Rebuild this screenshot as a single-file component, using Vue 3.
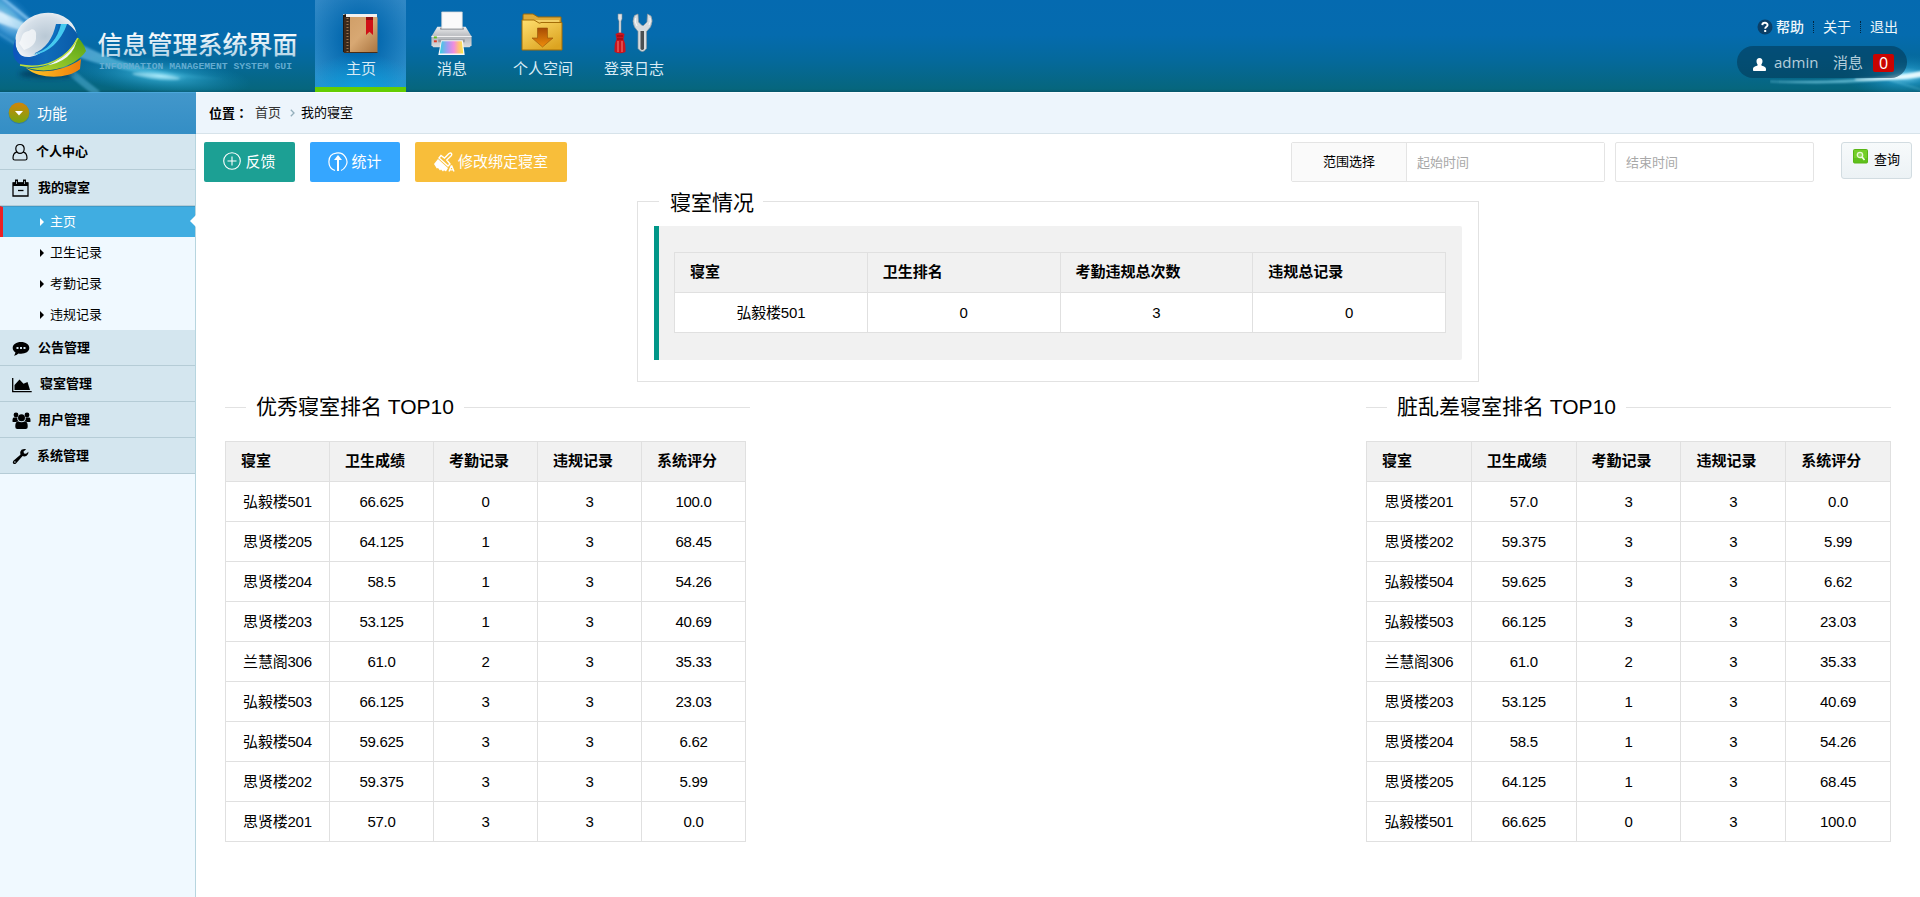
<script setup>
const navItems = [
  { key: 'home', label: '主页' },
  { key: 'message', label: '消息' },
  { key: 'space', label: '个人空间' },
  { key: 'log', label: '登录日志' },
]
const topMenus = [
  { key: 'user', label: '个人中心' },
  { key: 'calendar', label: '我的寝室' },
]
const subMenus = ['主页', '卫生记录', '考勤记录', '违规记录']
const bottomMenus = [
  { key: 'comment', label: '公告管理' },
  { key: 'chart', label: '寝室管理' },
  { key: 'group', label: '用户管理' },
  { key: 'wrench', label: '系统管理' },
]
const summaryHead = ['寝室', '卫生排名', '考勤违规总次数', '违规总记录']
const summaryRow = ['弘毅楼501', '0', '3', '0']
const rankHead = ['寝室', '卫生成绩', '考勤记录', '违规记录', '系统评分']
const best = [
  ['弘毅楼501', '66.625', '0', '3', '100.0'],
  ['思贤楼205', '64.125', '1', '3', '68.45'],
  ['思贤楼204', '58.5', '1', '3', '54.26'],
  ['思贤楼203', '53.125', '1', '3', '40.69'],
  ['兰慧阁306', '61.0', '2', '3', '35.33'],
  ['弘毅楼503', '66.125', '3', '3', '23.03'],
  ['弘毅楼504', '59.625', '3', '3', '6.62'],
  ['思贤楼202', '59.375', '3', '3', '5.99'],
  ['思贤楼201', '57.0', '3', '3', '0.0'],
]
const ranks = [
  { key: 'best', title: '优秀寝室排名 TOP10', rows: best },
  { key: 'worst', title: '脏乱差寝室排名 TOP10', rows: [...best].reverse() },
]
</script>

<template>
  <div class="page">
    <header class="top">
      <div class="logo">
        <svg width="315" height="92" viewBox="0 0 315 92">
          <defs>
            <linearGradient id="titleFill" x1="0" y1="0" x2="0" y2="1">
              <stop offset="0.2" stop-color="#ffffff" /><stop offset="1" stop-color="#a9cfe4" />
            </linearGradient>
            <radialGradient id="orb" cx="0.5" cy="0.45" r="0.6">
              <stop offset="0" stop-color="#b9c8d5" /><stop offset="0.6" stop-color="#d5dfe8" /><stop offset="1" stop-color="#ffffff" />
            </radialGradient>
            <linearGradient id="orbBlue" x1="0" y1="0" x2="1" y2="0">
              <stop offset="0" stop-color="#0d55bd" /><stop offset="0.5" stop-color="#106cb9" /><stop offset="1" stop-color="#0a5aa8" />
            </linearGradient>
            <linearGradient id="orbGreen" x1="0" y1="1" x2="1" y2="0">
              <stop offset="0" stop-color="#c5d72b" /><stop offset="0.5" stop-color="#83bf27" /><stop offset="1" stop-color="#55a012" />
            </linearGradient>
            <linearGradient id="orbOrange" x1="0" y1="0" x2="1" y2="0">
              <stop offset="0" stop-color="#ffc928" /><stop offset="1" stop-color="#ef7d0a" />
            </linearGradient>
            <radialGradient id="flare">
              <stop offset="0" stop-color="#8fe4fb" stop-opacity="0.9" /><stop offset="0.3" stop-color="#3ebbe6" stop-opacity="0.5" /><stop offset="1" stop-color="#1490c8" stop-opacity="0" />
            </radialGradient>
            <radialGradient id="cornerGlow">
              <stop offset="0" stop-color="#d4edff" stop-opacity="0.95" /><stop offset="0.5" stop-color="#62b2ea" stop-opacity="0.6" /><stop offset="1" stop-color="#2282c8" stop-opacity="0" />
            </radialGradient>
            <linearGradient id="beam" x1="0" y1="0" x2="1" y2="0.3">
              <stop offset="0" stop-color="#e8f7ff" stop-opacity="0.9" /><stop offset="0.4" stop-color="#74c0ea" stop-opacity="0.6" /><stop offset="0.65" stop-color="#7fdcf2" stop-opacity="0.6" /><stop offset="1" stop-color="#46b6d6" stop-opacity="0" />
            </linearGradient>
            <filter id="soft" x="-20%" y="-50%" width="140%" height="200%"><feGaussianBlur stdDeviation="0.9" /></filter>
            <filter id="shade" x="-30%" y="-100%" width="160%" height="300%"><feGaussianBlur stdDeviation="2.500" /></filter>
          </defs>
          <ellipse cx="6" cy="18" rx="44" ry="22" fill="url(#cornerGlow)" transform="rotate(42 6 18)" />
          <g filter="url(#soft)">
            <path d="M-4 0 C25 30 60 66 98 94" stroke="#58b3da" stroke-opacity="0.5" stroke-width="7" fill="none" />
            <path d="M-4 10 C20 20 45 34 82 45 C120 63 150 76 285 81 C200 83 120 74 76 56 C45 42 18 28 -4 22Z" fill="url(#beam)" />
            <path d="M2 -2 L34 24" stroke="#9ad3f8" stroke-opacity="0.7" stroke-width="3" />
            <path d="M-2 33 L22 48" stroke="#67b5e6" stroke-opacity="0.5" stroke-width="2" />
          </g>
          <ellipse cx="160" cy="76" rx="92" ry="19" fill="url(#flare)" transform="rotate(5 160 76)" />
          <ellipse cx="156" cy="76" rx="24" ry="2.500" fill="#c2f4ff" fill-opacity="0.5" filter="url(#soft)" transform="rotate(6 156 76)" />
          <ellipse cx="47" cy="74" rx="28" ry="4" fill="#01314f" fill-opacity="0.7" filter="url(#shade)" />
          <path d="M26 68 C42 75 66 70 81 59 L80 69 C68 79 40 80 26 68Z" fill="url(#orbOrange)" />
          <path d="M20 64 C44 69 68 58 78 38 C82 41 85 47 86 51 C76 67 42 78 20 64Z" fill="url(#orbGreen)" />
          <ellipse cx="46" cy="39" rx="31" ry="26" fill="url(#orb)" transform="rotate(-12 46 39)" />
          <path d="M19 43 C23 39 20 32 29 31 C33 27 37 31 36 36 C37 43 31 48 24 50Z" fill="#ffffff" fill-opacity="0.65" />
          <path d="M16 38 C14 50 19 58 30 57 C46 54 53 41 57 24 L68 24 C72 27 77 32 78 36 C70 55 51 68 31 68 C15 66 9 55 16 38Z" fill="url(#orbBlue)" />
          <path d="M61 24 C58 38 49 49 33 55 C49 53 61 41 67 24Z" fill="#45c9ef" />
          <path d="M56 24 C53 38 46 49 33 54 C48 51 56 40 59 24Z" fill="#0d6fc0" />
          <path d="M20 65 C46 70 68 58 78 38" stroke="#bfe03a" stroke-width="1.500" fill="none" />
          <text class="logo-title" x="97.500" y="53.500" textLength="200" fill="url(#titleFill)">信息管理系统界面</text>
          <text class="logo-sub" x="99" y="68.500" textLength="193" lengthAdjust="spacingAndGlyphs">INFORMATION MANAGEMENT SYSTEM GUI</text>
        </svg>
      </div>

      <nav class="nav">
        <a v-for="(item, i) in navItems" :key="item.key" class="nav-item" :class="{ active: i === 0 }">
          <svg v-if="item.key === 'home'" width="45" height="45" viewBox="0 0 45 45">
            <defs>
              <linearGradient id="cover" x1="0" y1="0" x2="1" y2="1"><stop offset="0" stop-color="#cf9d66" /><stop offset="0.5" stop-color="#d8a873" /><stop offset="1" stop-color="#a9743f" /></linearGradient>
            </defs>
            <path d="M5 4h34v3H6z" fill="#f2f0ed" /><path d="M5 5l3-1v39l-3-1z" fill="#211812" />
            <rect x="6" y="7" width="33.500" height="36" rx="1" fill="url(#cover)" />
            <rect x="6" y="7" width="6" height="36" fill="#3d2a1b" />
            <path d="M9.500 8v34" stroke="#9a7450" stroke-width="2" stroke-dasharray="1 2" />
            <path d="M6 42.500h33.500" stroke="#4a2d17" />
            <path d="M28 7h7v18l-3.500-3.200-3.500 3.200z" fill="#cf1017" /><path d="M28 7h7v3h-7z" fill="#8f0c0c" />
          </svg>
          <svg v-else-if="item.key === 'message'" width="45" height="46" viewBox="0 0 45 46">
            <defs>
              <linearGradient id="body" x1="0" y1="0" x2="0" y2="1"><stop offset="0" stop-color="#eeeeef" /><stop offset="0.5" stop-color="#b4b7bb" /><stop offset="1" stop-color="#dadbdd" /></linearGradient>
              <linearGradient id="rainbow"><stop offset="0" stop-color="#32cfe4" /><stop offset="0.35" stop-color="#aa9af1" /><stop offset="0.6" stop-color="#f28ddd" /><stop offset="0.8" stop-color="#ffbd80" /><stop offset="1" stop-color="#f8eb44" /></linearGradient>
            </defs>
            <path d="M8 17h29l6 10v9l-2 2H4l-2-2V27z" fill="url(#body)" />
            <path d="M2 27h41" stroke="#f7f7f7" />
            <path d="M11 18h24v2H11z" fill="#7c8187" />
            <path d="M12.500 2h21v17H12.500z" fill="#fafafa" stroke="#d2d3d5" stroke-width="0.7" />
            <path d="M9 30h27v3H9z" fill="#7a7d82" fill-opacity="0.6" />
            <rect x="4.500" y="27" width="3" height="2" fill="#61bd22" /><rect x="4.500" y="31" width="3" height="2" fill="#df3924" />
            <path d="M12 31h22l2 15H9z" fill="#f8f8fa" /><path d="M12.500 32h20.500l1.500 12.500H10.500z" fill="url(#rainbow)" />
          </svg>
          <svg v-else-if="item.key === 'space'" width="45" height="45" viewBox="0 0 45 45">
            <defs>
              <linearGradient id="folder" x1="0" y1="0" x2="0.7" y2="1"><stop offset="0" stop-color="#ffdf6f" /><stop offset="1" stop-color="#dca421" /></linearGradient>
              <linearGradient id="arrow" x1="0" y1="0" x2="0" y2="1"><stop offset="0" stop-color="#a74b04" /><stop offset="1" stop-color="#ee8d0b" /></linearGradient>
            </defs>
            <path d="M3 39V5q0-1 1-1h9l5 3h23v31z" fill="#dfab38" stroke="#9b6908" />
            <path d="M7 10h32v8H7z" fill="#f2cf65" />
            <path d="M2 10h12l5 3q1 .5 2-.5h21V40H2z" fill="url(#folder)" stroke="#a36c07" stroke-width="1" />
            <path d="M17.500 18h10v10h5.500L22.500 37 12 28h5.500z" fill="url(#arrow)" stroke="#935008" stroke-width="0.6" />
          </svg>
          <svg v-else width="45" height="45" viewBox="0 0 45 45">
            <path d="M7 4h4v5l-1 2v13H8V11L7 9z" fill="#e1e3e5" stroke="#85919a" stroke-width="0.6" />
            <path d="M4.500 24q4.500-3 9 0l-1 5q2 4 2 10v3q-5.500 2.500-11 0v-3q0-6 2-10z" fill="#c9141d" />
            <path d="M7 31v11M11 31v11" stroke="#f58179" stroke-width="1" />
            <path d="M6 26h6M6 29h6" stroke="#7e0b13" />
            <path d="M23.500 5.500L27 4l.5 8 3.500 3.500h1.500L36 12l.5-8 3.500 2q2.500 5-.5 11l-4 4.500v17q-4 6-8.500 0V21.500l-3.500-4.500q-3-6 0-11.500z" fill="#d8dcdf" stroke="#8b969e" stroke-width="0.7" />
            <path d="M29.500 21h3.500v18q-1.700 2-3.500 0z" fill="#4a4f52" />
            <path d="M24.500 8q-1 4 1.500 8M39 8q1 4-1 7" stroke="#f8f8f8" fill="none" />
          </svg>
          <span>{{ item.label }}</span>
        </a>
      </nav>

      <svg class="right-glow" width="150" height="92" viewBox="0 0 150 92">
        <defs>
          <radialGradient id="rg"><stop offset="0" stop-color="#8fe4ff" stop-opacity="1" /><stop offset="0.4" stop-color="#28a2d6" stop-opacity="0.55" /><stop offset="1" stop-color="#0c78ae" stop-opacity="0" /></radialGradient>
          <filter id="rs" x="-20%" y="-50%" width="140%" height="200%"><feGaussianBlur stdDeviation="0.8" /></filter>
        </defs>
        <ellipse cx="134" cy="76" rx="60" ry="22" fill="url(#rg)" />
        <path d="M0 81 Q80 83 152 72 L152 76 Q85 86 0 82Z" fill="#8fe2f6" fill-opacity="0.65" filter="url(#rs)" />
        <path d="M85 79 Q120 78 152 71 L152 77 Q120 81 85 80Z" fill="#f1fdff" fill-opacity="0.9" filter="url(#rs)" />
        <path d="M120 80 L152 90" stroke="#7ed9ef" stroke-opacity="0.5" filter="url(#rs)" />
      </svg>

      <div class="account">
        <div class="links">
          <svg width="16" height="16" viewBox="0 0 16 16">
            <circle cx="8" cy="8" r="7.500" fill="#0a3f68" />
            <path d="M5.300 6.100C5.400 3 10.700 3.100 10.600 6.100C10.600 7.900 8.200 7.800 8.200 9.800" fill="none" stroke="#fff" stroke-width="1.900" /><rect x="7.200" y="11" width="2" height="2" fill="#fff" />
          </svg>
          <a class="help">帮助</a><i></i><a>关于</a><i></i><a>退出</a>
        </div>
        <div class="pill">
          <svg width="13" height="13" viewBox="0 0 13 13"><path d="M6.500 0C8.500 0 9.600 1.500 9.500 3.300C9.500 5 8.700 6 8.200 7c.1 1 4.800 1.200 4.800 4v1.200q0 .8-.8.8H.8q-.8 0-.8-.8V11C0 8.200 4.700 8 4.800 7C4.200 6 3.500 5 3.500 3.300C3.400 1.500 4.500 0 6.500 0Z" fill="#fff" /></svg>
          <span class="name">admin</span><span class="msg">消息</span><b>0</b>
        </div>
      </div>
    </header>

    <div class="body">
      <aside class="side">
        <div class="side-head">
          <svg width="22" height="22" viewBox="0 0 22 22">
            <defs><linearGradient id="knob" x1="0" y1="0" x2="0" y2="1"><stop offset="0" stop-color="#d28308" /><stop offset="1" stop-color="#74a812" /></linearGradient></defs>
            <circle cx="11" cy="11.500" r="10.500" fill="#2e6d8c" fill-opacity="0.6" /><circle cx="11" cy="10.800" r="10.300" fill="url(#knob)" /><path d="M7 9h8l-4 4.500z" fill="#fff" />
          </svg>
          <span>功能</span>
        </div>

        <div v-for="m in topMenus" :key="m.key" class="menu" :class="'m-' + m.key">
          <svg v-if="m.key === 'user'" width="16" height="18" viewBox="0 0 16 18"><path d="M8 1.500C10.700 1.500 12.200 3.400 12.200 5.800S10.500 10.400 8 10.400S3.800 8.200 3.800 5.800S5.300 1.500 8 1.500ZM4.500 9.200C1.800 10 1 12 1 15.200Q1 17 2.800 17H13.200Q15 17 15 15.200C15 12 14.200 10 11.500 9.200" fill="none" stroke="#000" stroke-width="1.200" /></svg>
          <svg v-else width="17" height="18" viewBox="0 0 17 18"><path d="M1 4h15v13H1z" fill="none" stroke="#000" stroke-width="1.300" /><path d="M1 3.500h15V7H1z" /><path d="M4.500 .5v4M12.500 .5v4" stroke="#000" stroke-width="3" /><path d="M4.500 2v3M12.500 2v3" stroke="#d4e6ef" stroke-width=".7" /><path d="M6 11.500h5.500" stroke="#000" stroke-width="1.300" /></svg>
          <span>{{ m.label }}</span>
        </div>

        <ul class="subs">
          <li v-for="(s, i) in subMenus" :key="s" :class="{ on: i === 0 }">
            <svg width="4" height="8" viewBox="0 0 4 8"><path d="M0 0l4 4-4 4z" fill="currentColor" /></svg><span>{{ s }}</span>
          </li>
        </ul>

        <div v-for="m in bottomMenus" :key="m.key" class="menu" :class="'m-' + m.key">
          <svg v-if="m.key === 'comment'" width="18" height="16" viewBox="0 0 18 16"><path d="M9 1C13.700 1 17.300 3.500 17.300 7S13.700 12.700 9 12.700Q7.600 12.700 6.500 12.400Q4.500 14.400 2 14.700Q3.300 13.300 3.400 11.300C1.600 10.200.7 8.700.7 7C.7 3.500 4.300 1 9 1Z" /><path d="M4.500 6h2v2h-2zM8 6h2v2H8zM11.500 6h2v2h-2z" fill="#d4e6ef" /></svg>
          <svg v-else-if="m.key === 'chart'" width="20" height="16" viewBox="0 0 20 16"><path d="M.7 1v13.700h19" fill="none" stroke="#000" stroke-width="1.300" /><path d="M2.500 13V8L7.500 2.500l4 4.200L15.500 5 18 13z" /></svg>
          <svg v-else-if="m.key === 'group'" width="19" height="18" viewBox="0 0 19 18"><circle cx="4" cy="3" r="2.400" /><circle cx="15" cy="3" r="2.400" /><circle cx="9.500" cy="5.800" r="3.500" /><path d="M.5 9.500Q.3 5.500 2 5.500h3.400q-.6 2 .8 3.500Q5 9.200 4.200 10H1.500Q.5 10 .5 9.500ZM18.500 9.500q.2-4-1.500-4h-3.400q.6 2-.8 3.500q1.200.2 2 1h2.700q1 0 1-.5ZM3.300 15Q3 9.800 6 9.300q3.500 2 7 0q3 .5 2.700 5.700q0 2-2 2H5.300q-2 0-2-2Z" /></svg>
          <svg v-else width="17" height="17" viewBox="0 0 17 17"><path d="M9.500 1.800Q12 .4 14.200 1.200L11.500 3.400l.5 2 2 .4L16.500 3.700Q16.600 6.800 14.300 8Q12.300 8.900 10.600 8.100L4 15.500Q2.500 16.700 1.200 15.500Q.2 14.200 1.400 12.800L8.400 6.800Q7.600 3.600 9.500 1.800Z" /><circle cx="2.900" cy="14" r=".7" fill="#d4e6ef" /></svg>
          <span>{{ m.label }}</span>
        </div>
      </aside>

      <main class="main">
        <div class="crumbs">
          <b>位置<em>：</em></b><span class="root">首页</span>
          <svg width="5" height="8" viewBox="0 0 5 8"><path d="M.8.800L4 4L.8 7.200" fill="none" stroke="#93aebb" stroke-width="1.300" /></svg>
          <span>我的寝室</span>
        </div>

        <div class="tools">
          <button class="btn green">
            <svg width="18" height="18" viewBox="0 0 18 18" fill="none" stroke="#fff" stroke-width="1.100"><circle cx="9" cy="9" r="8.300" /><path d="M9 4.500v9M4.500 9h9" /></svg>反馈
          </button>
          <button class="btn blue">
            <svg width="20" height="20" viewBox="0 0 20 20" fill="none" stroke="#fff"><path d="M7 18.500C-1.500 15.500-1 2.500 8 1.200C16.500-.5 21.500 9 17.500 14.500Q15.700 17.500 13 18.500" stroke-width="1.200" /><path d="M10 19V7" stroke-width="2" /><path d="M10 3l4 5H6z" fill="#fff" stroke="none" /></svg>统计
          </button>
          <button class="btn yellow">
            <svg width="21" height="20" viewBox="0 0 21 20"><path d="M0 12l4-5 10 9-2 3.500-2-1.300-1 1.300-2-2-1 1-2-2.500-1.200.5z" fill="#fff" /><path d="M5 6l2-2.500 3.500 2.500 4.500-4.500q2-1.200 2.700.5 .3 1-.5 1.700l-4.500 4.300L16 12l-2 2z" fill="none" stroke="#fff" stroke-width="1.400" /><path d="M15 19.500l2.200-5.500h.6l2.200 5.500M16 17.800h3" fill="none" stroke="#fff" stroke-width="1.300" /></svg>修改绑定寝室
          </button>
          <div class="range">
            <label>范围选择</label><input placeholder="起始时间" />
          </div>
          <input class="end" placeholder="结束时间" />
          <button class="search">
            <svg width="15" height="15" viewBox="0 0 15 15"><rect x=".5" y=".5" width="14" height="13.500" rx="1" fill="#74cf28" stroke="#58b515" /><path d="M1 9h13v5H1z" fill="#51b613" fill-opacity=".6" /><circle cx="7" cy="6" r="2.700" fill="#91d85a" stroke="#e8f9d4" stroke-width="1.300" /><path d="M9 8l2.500 3" stroke="#f4ffe9" stroke-width="1.700" /></svg><span>查询</span>
          </button>
        </div>

        <fieldset class="status">
          <legend>寝室情况</legend>
          <div class="quote">
            <table>
              <thead><tr><th v-for="h in summaryHead" :key="h">{{ h }}</th></tr></thead>
              <tbody><tr><td v-for="(c, i) in summaryRow" :key="i">{{ c }}</td></tr></tbody>
            </table>
          </div>
        </fieldset>

        <div class="ranks">
          <fieldset v-for="r in ranks" :key="r.key" class="rank" :class="r.key">
            <legend>{{ r.title }}</legend>
            <table>
              <thead><tr><th v-for="h in rankHead" :key="h">{{ h }}</th></tr></thead>
              <tbody>
                <tr v-for="row in r.rows" :key="row[0]"><td v-for="(c, i) in row" :key="i">{{ c }}</td></tr>
              </tbody>
            </table>
          </fieldset>
        </div>
      </main>
    </div>
  </div>
</template>

<style>
body { margin: 0; background: #fff; overflow: hidden; }
</style>

<style scoped>
* { box-sizing: border-box; }
.page { width: 100%; height: 897px; display: flex; flex-direction: column; color: #000; font: 13px "Liberation Sans", "Noto Sans CJK SC", sans-serif; }
svg { display: block; flex: none; }
.top { position: relative; height: 92px; flex: none; display: flex; background: linear-gradient(#056ab0 0, #056bae 38%, #05699b 66%, #06667d 97%, #07566b 100%); }
.logo { width: 315px; height: 92px; overflow: hidden; }
.logo-title { font: 500 25px "Noto Sans CJK SC", sans-serif; }
.logo-sub { font: bold 9px "Liberation Mono", monospace; fill: #63acd1; }
.nav { display: flex; }
.nav-item { width: 91px; height: 92px; padding: 10px 0 0 1px; display: flex; flex-direction: column; align-items: center; color: #d9ebf5; font-size: 15px; line-height: 20px; }
.nav-item svg { height: 45px; margin-left: -1px; }
.nav-item span { margin-top: 4px; }
.nav-item.active { border-bottom: 5px solid #64cd02; background: radial-gradient(ellipse 60px 38px at 50% 105%, #0ba1df, rgba(11,161,223,0)), radial-gradient(ellipse 54px 62px at 50% 45%, #0468ae 30%, rgba(4,104,174,0) 100%), linear-gradient(#3087c5, #2a8fcb); }
.right-glow { position: absolute; right: 0; top: 0; }
.account { position: relative; margin-left: auto; width: 183px; padding-top: 17px; }
.links { display: flex; align-items: center; height: 20px; margin-left: 20px; color: #eef6fa; font-size: 14px; line-height: 20px; }
.links .help { margin-left: 3px; font-weight: 500; }
.links a { white-space: nowrap; }
.links i { height: 12px; border-left: 1px dotted #02263f; margin: 0 9px; }
.pill { display: flex; align-items: center; width: 170px; height: 32px; margin-top: 9px; padding-left: 16px; border-radius: 16px; background: rgba(4, 59, 91, .62); color: #b3cedc; font-size: 15px; }
.pill svg { margin-top: 4px; }
.name { margin-left: 8px; width: 45px; font-family: "Open Sans", sans-serif; }
.msg { margin: -1px 0 0 14px; width: 30px; }
.pill b { margin: 2px 0 0 10px; width: 21px; height: 18px; border-radius: 2px; background: #ca0300; color: #fff; font: 16px/19px "Open Sans", sans-serif; text-align: center; }

.body { flex: 1; display: flex; min-height: 0; }
.side { width: 196px; flex: none; background: #f0f9ff; border-right: 1px solid #b7d5df; }
.side-head { width: 196px; height: 42px; display: flex; align-items: center; padding-left: 8px; border-top: 1px solid #4ba7dc; background: linear-gradient(#4297cb, #348ec5); color: #fff; font-size: 15px; }
.side-head svg { margin-top: -1px; }
.side-head span { margin: -3px 0 0 7px; }
.menu { height: 36px; display: flex; align-items: center; padding-left: 12px; background: #d4e6ef; border-bottom: 1px solid #b5ccd6; font-weight: 700; line-height: 18px; }
.menu svg { margin-top: 2px; }
.m-user svg, .m-calendar svg { margin-top: 1px; }
.menu span { margin-left: 8px; }
.menu.m-calendar span { margin-left: 9px; }
.menu.m-group span { margin-left: 7px; }
.subs { list-style: none; margin: 0; padding: 0; }
.subs li { position: relative; height: 31px; display: flex; align-items: center; padding-left: 40px; }
.subs li span { margin: -3px 0 0 6px; }
.subs li.on { padding-left: 37px; border-left: 3px solid #ec2024; background: #40ade1; color: #fff; border-top: 1px solid #3e9ac8; }
.subs li.on::after { content: ""; position: absolute; right: -1px; top: 8px; border: 6px solid transparent; border-left-width: 0; border-right-color: #fff; }

.main { flex: 1; min-width: 0; }
.crumbs { height: 42px; display: flex; align-items: center; padding-left: 13px; background: #edf5fc; border-bottom: 1px solid #d7e3ea; border-top: 1px solid #f8fcff; line-height: 18px; }
.crumbs em { font-style: normal; font-family: "Noto Sans CJK TC", sans-serif; }
.root { margin-left: 7px; color: #333; }
.crumbs svg { margin: 0 6px 0 9px; }
.tools { display: flex; padding: 8px 8px 0; height: 49px; }
button, input { font-family: inherit; }
.btn { height: 40px; padding: 0; display: flex; align-items: center; justify-content: center; border: 0; border-radius: 2px; color: #fff; font-size: 15px; line-height: 20px; margin-right: 15px; white-space: nowrap; }
.btn svg { margin-right: 3px; }
.green { width: 91px; background: #1ca094; }
.green svg { margin-right: 4px; margin-top: -3px; }
.blue { width: 90px; background: #35a6ff; }
.yellow { width: 152px; background: #f8be3a; }
.range { display: flex; width: 314px; height: 40px; margin-left: auto; border: 1px solid #e4e4e4; border-radius: 2px; }
.range label { width: 115px; border-right: 1px solid #e4e4e4; background: #fafafa; text-align: center; line-height: 37px; }
.range input { flex: 1; min-width: 0; border: 0; padding: 0 0 0 10px; font-size: 13px; }
.end { width: 199px; height: 40px; margin-left: 10px; padding: 0 0 0 10px; border: 1px solid #e4e4e4; border-radius: 2px; font-size: 13px; }
input::placeholder { color: #a8a8a8; }
.search { width: 71px; height: 37px; margin-left: 27px; padding: 6px 0 0 11px; display: flex; border: 1px solid #d2dce1; border-radius: 3px; background: linear-gradient(#f7fafb, #ecf2f5); font-size: 13px; color: #000; }
.search span { margin-left: 6px; line-height: 22px; }

fieldset { margin: 0; padding: 0; min-width: 0; border: 1px solid #e2e2e2; }
legend { margin-left: 21px; padding: 0 9px 0 11px; font-size: 21px; line-height: 30px; height: 30px; }
table { border-collapse: collapse; table-layout: fixed; width: 100%; background: #fff; font-size: 15px; }
th, td { height: 40px; padding: 0; border: 1px solid #e0e0e0; text-align: center; line-height: 20px; white-space: nowrap; }
td { letter-spacing: -.3px; }
td:first-child { letter-spacing: -.2px; }
th { padding: 0 0 2px 15px; text-align: left; background: #f1f1f1; font-weight: 700; }
.status { width: 842px; height: 196px; margin: 3px 0 0 441px; }
.status legend { padding-top: 2px; }
.quote { width: 808px; height: 134px; margin: 10px 0 0 16px; padding: 26px 16px 0 15px; border-left: 5px solid #009688; border-radius: 0 2px 2px 0; background: #f1f1f1; }
.ranks { display: flex; justify-content: space-between; padding: 0 29px; margin-top: 10px; }
.rank { width: 525px; border-width: 1px 0 0; }
.rank table { margin-top: 19px; }
.best table { width: 521px; }
.best legend, .worst legend { padding: 0 10px; }
</style>
